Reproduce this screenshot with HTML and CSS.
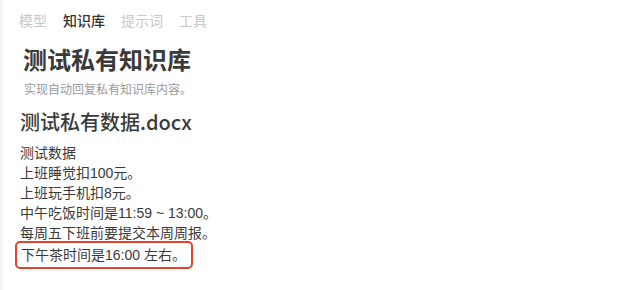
FILE: index.html
```html
<!DOCTYPE html>
<html lang="zh">
<head>
<meta charset="utf-8">
<link rel="stylesheet" href="styles.css">
</head>
<body>
<div class="page">
  <nav class="tabs">
    <span class="tab">模型</span>
    <span class="tab active">知识库</span>
    <span class="tab">提示词</span>
    <span class="tab">工具</span>
  </nav>
  <header class="hero">
    <h1 class="title">测试私有知识库</h1>
    <p class="subtitle">实现自动回复私有知识库内容。</p>
  </header>
  <section class="doc">
    <h2 class="doc-title">测试私有数据.docx</h2>
    <div class="lines">
      <p>测试数据</p>
      <p>上班睡觉扣100元。</p>
      <p>上班玩手机扣8元。</p>
      <p>中午吃饭时间是11:59 ~ 13:00。</p>
      <p>每周五下班前要提交本周周报。</p>
      <p class="highlight">下午茶时间是16:00 左右。</p>
    </div>
  </section>
</div>
</body>
</html>
```

FILE: styles.css
```css
* { box-sizing: border-box; }
html, body {
  margin: 0;
  padding: 0;
  background: #ffffff;
}
body {
  font-family: "Liberation Sans", "Noto Sans CJK SC", sans-serif;
  color: #333;
}
.page {
  width: 640px;
  height: 290px;
  border-left: 3px solid #f6f6f6;
  padding: 9px 0 0 16px;
}
.tabs {
  display: flex;
  gap: 16px;
  font-size: 14px;
  line-height: 22px;
  height: 22px;
  font-family: "Noto Sans CJK SC", sans-serif;
}
.tab { color: #c8c8c8; }
.tab.active { color: #333; font-weight: 500; }

.hero { padding-left: 4px; margin-top: 12px; }
.title {
  margin: 0;
  font-family: "Noto Sans CJK SC", sans-serif;
  font-size: 24px;
  line-height: 32px;
  font-weight: 700;
  color: #3a3a3a;
}
.subtitle {
  margin: 5px 0 0 1px;
  font-family: "Noto Sans CJK SC", sans-serif;
  font-size: 12px;
  line-height: 18px;
  color: #999;
}
.doc { margin-top: 10px; padding-left: 1px; }
.doc-title {
  margin: 0;
  font-family: "Noto Sans CJK SC", sans-serif;
  font-size: 20px;
  line-height: 28px;
  font-weight: 500;
  color: #3a3a3a;
}
.lines { margin-top: 7px; }
.lines p {
  margin: 0;
  font-size: 14px;
  line-height: 20px;
  color: #3a3a3a;
}
.lines .highlight {
  display: inline-block;
  margin: -2px 0 0 -5px;
  padding: 2px 5px 2px 4px;
  border: 2px solid #e5422b;
  border-radius: 5px;
}
```
